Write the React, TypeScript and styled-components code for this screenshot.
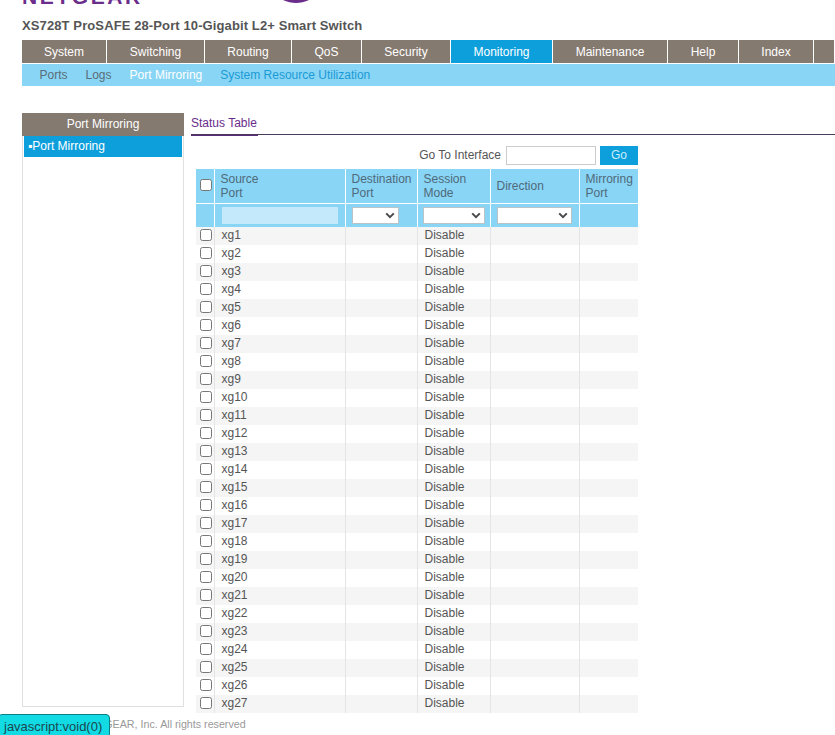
import React from "react";
import styled, { createGlobalStyle } from "styled-components";

const Global = createGlobalStyle`
  html, body { margin: 0; padding: 0; background: #fff; height: 735px; overflow: hidden; }
  body { font-family: "Liberation Sans", Arial, sans-serif; color: #555; }
  * { box-sizing: border-box; }
`;

const Page = styled.div`
  position: relative;
  width: 835px;
  height: 735px;
  overflow: hidden;
  padding-left: 22px;
`;

const LogoStrip = styled.div`
  height: 16px;
  overflow: hidden;
  display: flex;
  align-items: flex-start;
`;

const LogoWord = styled.div`
  flex: 0 0 125px;
  height: 5px;
  overflow: hidden;
  display: flex;
  align-items: flex-end;
  font-size: 21px;
  font-weight: 700;
  letter-spacing: 2.6px;
  line-height: 16px;
  color: #6b2d8b;
`;

const LogoMark = styled.svg`
  flex: 0 0 26px;
  height: 3px;
  margin-left: 136px;
`;

const Title = styled.h1`
  margin: 0;
  height: 24px;
  line-height: 20px;
  font-size: 13px;
  font-weight: 700;
  color: #555;
  letter-spacing: 0.11px;
`;

const Menu = styled.nav`
  display: flex;
  height: 24px;
  width: 813px;
`;

const MenuItem = styled.div<{ $w: number; $active?: boolean }>`
  flex: 0 0 ${(p) => p.$w}px;
  background: ${(p) => (p.$active ? "#0d9fdc" : "#857a70")};
  color: #fff;
  font-size: 12px;
  line-height: 24px;
  text-align: center;
  border-right: 1px solid #fff;
  border-bottom: 1px solid #fff;
`;

const SubMenu = styled.div`
  display: flex;
  align-items: center;
  width: 813px;
  height: 22px;
  padding-left: 17.5px;
  gap: 18px;
  background: #89d5f5;
  font-size: 12px;
`;

const SubLink = styled.span<{ $tone: string }>`
  color: ${(p) => p.$tone};
`;

const Body = styled.div`
  display: flex;
  margin-top: 27px;
  height: 596px;
`;

const Side = styled.aside`
  flex: 0 0 162px;
  height: 594px;
  border: 1px solid #e0e0e0;
  border-top: 0;
`;

const SideHead = styled.div`
  margin: 0 -1px;
  height: 23px;
  background: #857a70;
  color: #fff;
  font-size: 12px;
  line-height: 23px;
  text-align: center;
`;

const SideItem = styled.div`
  margin: 0 1px;
  height: 21px;
  background: #0d9fdc;
  color: #fff;
  font-size: 12px;
  line-height: 20px;
  padding-left: 4px;
`;

const Main = styled.main`
  flex: 1;
  margin-left: 7px;
  min-width: 0;
`;

const TabBar = styled.div`
  height: 22px;
  border-bottom: 1px solid #4b3b5a;
  width: 660px;
`;

const Tab = styled.div`
  display: inline-block;
  height: 22px;
  padding-right: 1px;
  font-size: 12px;
  line-height: 18px;
  color: #6b2d8b;
  border-bottom: 1px solid #5c2d7a;
`;

const GoRow = styled.div`
  display: flex;
  align-items: center;
  justify-content: flex-end;
  width: 447px;
  height: 19px;
  margin-top: 11px;
  font-size: 12px;
  color: #555;
`;

const GoLabel = styled.span`
  margin-bottom: 2px;
`;

const GoInput = styled.div`
  width: 90px;
  height: 19px;
  margin-left: 5px;
  border: 1px solid #ccc;
  background: #fff;
`;

const GoButton = styled.div`
  width: 38px;
  height: 19px;
  margin-left: 4px;
  background: #0d9fdc;
  color: #c9eefb;
  font-size: 12px;
  line-height: 19px;
  text-align: center;
`;

const Table = styled.table`
  border-collapse: collapse;
  table-layout: fixed;
  width: 442px;
  margin: 4px 0 0 5px;
  font-size: 12px;
`;

const Head = styled.th`
  background: #89d5f5;
  border-right: 1px solid #fff;
  border-bottom: 1px solid #fff;
  color: #4f6a7a;
  font-weight: 400;
  font-size: 12px;
  line-height: 14px;
  text-align: left;
  padding: 3px 0 0 6px;
  height: 34px;
  vertical-align: top;
  &:last-child { border-right: 0; }
`;

const HeadMiddle = styled(Head)`
  vertical-align: middle;
  padding: 0 0 0 6px;
`;

const FilterCell = styled.td`
  background: #89d5f5;
  height: 24px;
  padding: 0;
  border-right: 1px solid #fff;
  &:last-child { border-right: 0; }
`;

const FilterInput = styled.div`
  width: 116px;
  height: 17px;
  margin-left: 7px;
  background: #c3e9fa;
`;

const FilterSelect = styled.div<{ $w: number; $m: number }>`
  width: ${(p) => p.$w}px;
  height: 17px;
  margin-left: ${(p) => p.$m}px;
  background: #fff;
  border: 1px solid #b9c3c8;
  display: flex;
  align-items: center;
  justify-content: flex-end;
  padding-right: 3px;
`;

const Row = styled.tr<{ $odd: boolean }>`
  background: ${(p) => (p.$odd ? "#f5f5f5" : "#fff")};
`;

const Cell = styled.td`
  height: 18px;
  padding: 0 0 2px 7px;
  border-right: 1px solid #e4e4e4;
  color: #555;
  font-size: 12px;
  line-height: 16px;
  &:last-child { border-right: 0; }
`;

const CheckCell = styled(Cell)`
  padding: 0 0 2px 4px;
`;

const HeadCheckCell = styled(HeadMiddle)`
  padding: 0 0 1px 4px;
`;

const Check = styled.span`
  display: block;
  width: 12px;
  height: 12px;
  border: 1px solid #777;
  border-radius: 2.5px;
  background: #fff;
`;

const Footer = styled.div`
  margin: 8px 0 0 -4px;
  font-size: 10.7px;
  line-height: 14px;
  color: #999;
  white-space: nowrap;
`;

const StatusTip = styled.div`
  position: absolute;
  left: -2px;
  top: 714px;
  width: 112px;
  height: 24px;
  padding: 4px 0 0 5px;
  background: #12dbe4;
  border: 1px solid #0e7f86;
  border-radius: 4px;
  color: #1c4650;
  font-size: 13px;
  line-height: 15px;
`;

const Chevron = () => (
  <svg width="10" height="7" viewBox="0 0 10 7" aria-hidden="true">
    <path d="M1.2 1.4 5 5.2l3.8-3.8" fill="none" stroke="#4a4a4a" strokeWidth="2" />
  </svg>
);

const menu: [string, number, boolean?][] = [
  ["System", 85],
  ["Switching", 98],
  ["Routing", 87],
  ["QoS", 70],
  ["Security", 89],
  ["Monitoring", 102, true],
  ["Maintenance", 115],
  ["Help", 71],
  ["Index", 75],
  ["", 21],
];

const cols = [18, 131, 72, 73, 89, 59];
const ports = Array.from({ length: 27 }, (_, i) => `xg${i + 1}`);

export default function App() {
  return (
    <Page>
      <Global />
      <LogoStrip>
        <LogoWord>NETGEAR</LogoWord>
        <LogoMark viewBox="0 0 26 3" aria-hidden="true">
          <path d="M0 0h26C22 2 17 3 13 3S4 2 0 0Z" fill="#6b2d8b" />
        </LogoMark>
      </LogoStrip>
      <Title>XS728T ProSAFE 28-Port 10-Gigabit L2+ Smart Switch</Title>
      <Menu>
        {menu.map(([t, w, a]) => (
          <MenuItem key={t || "blank"} $w={w} $active={a}>{t}</MenuItem>
        ))}
      </Menu>
      <SubMenu>
        <SubLink $tone="#5a6d78">Ports</SubLink>
        <SubLink $tone="#5a6d78">Logs</SubLink>
        <SubLink $tone="#fff">Port Mirroring</SubLink>
        <SubLink $tone="#1a9ad6">System Resource Utilization</SubLink>
      </SubMenu>
      <Body>
        <Side>
          <SideHead>Port Mirroring</SideHead>
          <SideItem>▪Port Mirroring</SideItem>
        </Side>
        <Main>
          <TabBar><Tab>Status Table</Tab></TabBar>
          <GoRow>
            <GoLabel>Go To Interface</GoLabel>
            <GoInput />
            <GoButton>Go</GoButton>
          </GoRow>
          <Table>
            <colgroup>
              {cols.map((w, i) => <col key={i} width={w} />)}
            </colgroup>
            <thead>
              <tr>
                <HeadCheckCell><Check /></HeadCheckCell>
                <Head>Source<br />Port</Head>
                <Head>Destination<br />Port</Head>
                <Head>Session<br />Mode</Head>
                <HeadMiddle>Direction</HeadMiddle>
                <Head>Mirroring<br />Port</Head>
              </tr>
              <tr>
                <FilterCell />
                <FilterCell><FilterInput /></FilterCell>
                <FilterCell><FilterSelect $w={47} $m={6}><Chevron /></FilterSelect></FilterCell>
                <FilterCell><FilterSelect $w={62} $m={5}><Chevron /></FilterSelect></FilterCell>
                <FilterCell><FilterSelect $w={75} $m={6}><Chevron /></FilterSelect></FilterCell>
                <FilterCell />
              </tr>
            </thead>
            <tbody>
              {ports.map((p, i) => (
                <Row key={p} $odd={i % 2 === 0}>
                  <CheckCell><Check /></CheckCell>
                  <Cell>{p}</Cell>
                  <Cell />
                  <Cell>Disable</Cell>
                  <Cell />
                  <Cell />
                </Row>
              ))}
            </tbody>
          </Table>
        </Main>
      </Body>
      <Footer>© 1996-2016 NETGEAR, Inc. All rights reserved</Footer>
      <StatusTip>javascript:void(0)</StatusTip>
    </Page>
  );
}
